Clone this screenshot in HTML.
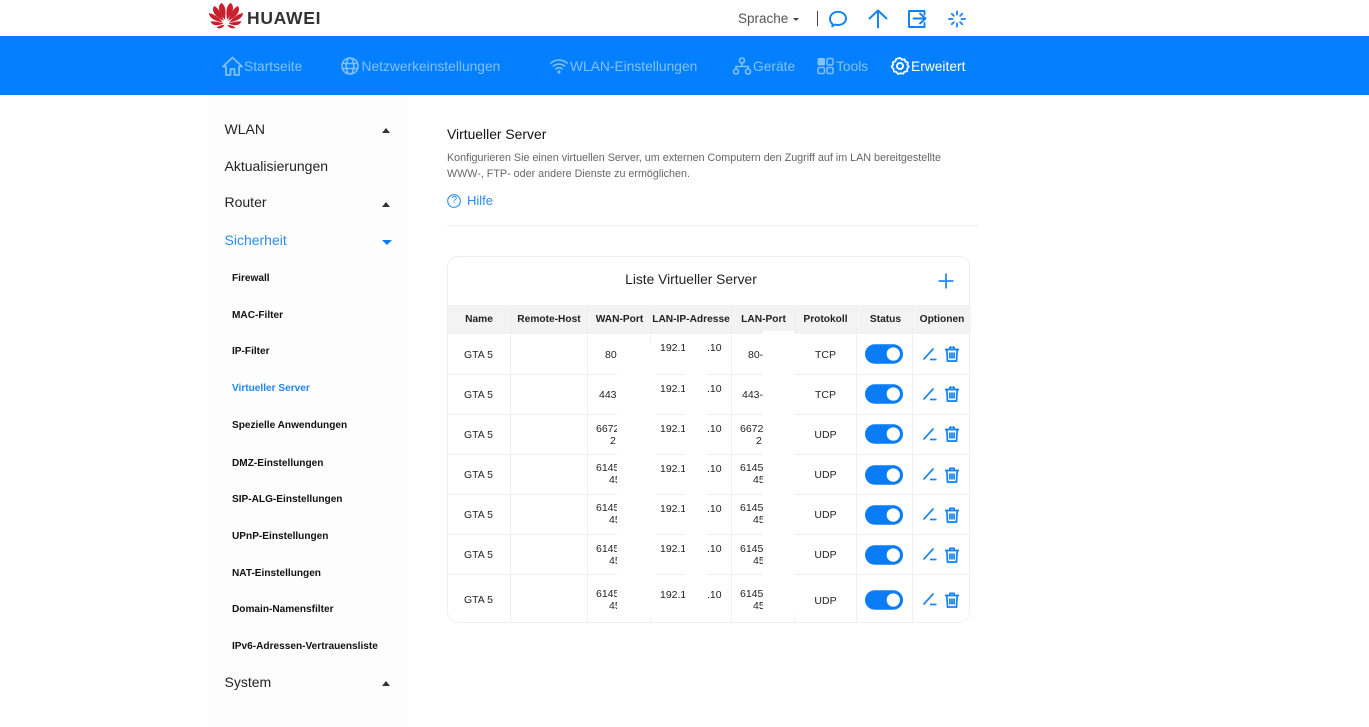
<!DOCTYPE html>
<html lang="de"><head><meta charset="utf-8"><title>Virtueller Server</title>
<style>
html,body{margin:0;padding:0;background:#fff}
body{width:1369px;height:727px;overflow:hidden;position:relative;font-family:"Liberation Sans",sans-serif;color:#222}
#w{position:absolute;left:0;top:0;width:1369px;height:727px;filter:blur(.3px);overflow:hidden}
.t{position:absolute;white-space:nowrap;line-height:16px}
.b{position:absolute}
svg{position:absolute;overflow:visible}
.n{font-size:13.8px;color:#82c0ff;top:59px}
.s{font-size:14px;left:224.500px;color:#222}
.u{font-size:10.100px;font-weight:bold;left:232px;color:#111}
.h{font-size:10.200px;font-weight:bold;top:312px;color:#222;text-align:center}
.c{font-size:10.500px;color:#222}
.i{stroke:#0f80f2;fill:none;stroke-width:1.900;stroke-linecap:round;stroke-linejoin:round}
.m{position:absolute;background:#fff}
.l{position:absolute;background:#efefef}
</style></head><body>
<svg width="0" height="0" style="position:absolute"><defs>
<symbol id="tg" viewBox="0 0 40 20" overflow="visible"><rect width="39" height="20" rx="10" fill="#0a7cf5"/><circle cx="29" cy="10" r="6.800" fill="#fff"/></symbol>
<symbol id="ed" viewBox="0 0 16 16" overflow="visible"><path d="M1.500 13.500 11.500 2.500M8 13.500H14.500" fill="none" stroke="#1f86f0" stroke-width="1.700"/></symbol>
<symbol id="tr" viewBox="0 0 16 16" overflow="visible"><path d="M1 3.500H15M5.500 3.500 6 1.300H10L10.500 3.500M2.800 3.500 3.500 15H12.500L13.200 3.500M5.900 6.500V12.500M8 6.500V12.500M10.100 6.500V12.500" fill="none" stroke="#0f80f2" stroke-width="1.700"/></symbol>
</defs></svg>
<div id="w">

<!-- top bar -->
<svg style="left:209px;top:3px" width="34" height="26" viewBox="0 0 34 26">
<g fill="#c8202f">
<path d="M12.500 0C8.500 2.500 9 9 15.800 16.800 17.300 9 16.800 2.500 12.500 0Z"/>
<path d="M21.500 0C25.500 2.500 25 9 18.200 16.800 16.700 9 17.200 2.500 21.500 0Z"/>
<path d="M5 3C2 8 6 13.500 14.800 18 12 10.500 10 5 5 3Z"/>
<path d="M29 3C32 8 28 13.500 19.200 18 22 10.500 24 5 29 3Z"/>
<path d="M0 10C0 15 6 18 14 19.500 9.500 14.500 5.500 11 0 10Z"/>
<path d="M34 10C34 15 28 18 20 19.500 24.500 14.500 28.500 11 34 10Z"/>
<path d="M1.500 18.500C4.500 24 10 22.500 14.500 20.500 10 19 6 18 1.500 18.500Z"/>
<path d="M32.500 18.500C29.500 24 24 22.500 19.500 20.500 24 19 28 18 32.500 18.500Z"/>
<path d="M7.500 24.500C11 26.500 14 25 15.500 21.800 12 22.200 9.800 23 7.500 24.500Z"/>
<path d="M26.500 24.500C23 26.500 20 25 18.500 21.800 22 22.200 24.200 23 26.500 24.500Z"/>
</g></svg>
<div class="t" style="left:247px;top:10px;font-size:17.500px;font-weight:bold;color:#333;letter-spacing:.7px">HUAWEI</div>
<div class="t" style="left:738px;top:10.500px;font-size:13.500px;color:#555">Sprache</div>
<div class="b" style="left:793px;top:17.500px;width:0;height:0;border:3px solid transparent;border-top:3.500px solid #444;border-bottom:0"></div>
<div class="b" style="left:817px;top:11px;width:1px;height:15px;background:#444"></div>
<svg style="left:829px;top:10px" width="18" height="18" viewBox="0 0 18 18"><path class="i" d="M3.500 14C1.800 12.600 1 11 1 9 1 4.800 4.500 1.800 9 1.800 13.500 1.800 17 4.800 17 8.500 17 12.300 13.500 15 9 15 7.900 15 7 14.900 6 14.500L3.300 16.400Z"/></svg>
<svg style="left:868px;top:9px" width="20" height="20" viewBox="0 0 20 20"><path class="i" d="M1.500 9.500 10 1.500 18.500 9.500M10 1.500V18.500"/></svg>
<svg style="left:908px;top:10px" width="20" height="18" viewBox="0 0 20 18"><path class="i" d="M16.500 4.500V1H1V17H16.500V13M5.500 8.500H17.500M12 3.500 17.500 8.500 12 13.500"/></svg>
<svg style="left:948px;top:10px" width="18" height="18" viewBox="0 0 18 18"><path d="M9 1.500V4.500M9 13.500V16.500M1 9H4.500M13.500 9H17M3.800 3.800 5.800 5.800M12.200 12.200 14.200 14.200M14.200 3.800 12.200 5.800M5.800 12.200 3.800 14.200" stroke="#2a8ef5" stroke-width="2" fill="none" stroke-linecap="round"/></svg>

<!-- nav -->
<div class="b" style="left:0;top:36px;width:1369px;height:59px;background:#0480ff"></div>
<svg style="left:222px;top:56px" width="21" height="20" viewBox="0 0 21 20"><path d="M1 10.500 10.500 1.500 20 10.500H17V19H12.500V13H8.500V19H4V10.500Z" fill="none" stroke="#82c0ff" stroke-width="1.800" stroke-linejoin="round"/></svg>
<div class="t n" style="left:244px">Startseite</div>
<svg style="left:341px;top:57px" width="18" height="18" viewBox="0 0 18 18"><g fill="none" stroke="#82c0ff" stroke-width="1.600"><circle cx="9" cy="9" r="8"/><ellipse cx="9" cy="9" rx="3.800" ry="8"/><path d="M1.500 6.500H16.500M1.500 11.500H16.500"/></g></svg>
<div class="t n" style="left:361.500px">Netzwerkeinstellungen</div>
<svg style="left:550px;top:58px" width="18" height="16" viewBox="0 0 18 16"><g fill="none" stroke="#82c0ff" stroke-width="1.600" stroke-linecap="round"><path d="M1 5C5.500 1 12.500 1 17 5M3.500 8C6.500 5.500 11.500 5.500 14.500 8M6 10.800C7.800 9.500 10.200 9.500 12 10.800"/></g><circle cx="9" cy="14" r="1.600" fill="#82c0ff"/></svg>
<div class="t n" style="left:570px">WLAN-Einstellungen</div>
<svg style="left:733px;top:57px" width="18" height="18" viewBox="0 0 18 18"><g fill="none" stroke="#82c0ff" stroke-width="1.600"><circle cx="9" cy="3.500" r="2.500"/><circle cx="3" cy="14.500" r="2.500"/><circle cx="15" cy="14.500" r="2.500"/><path d="M9 6V9.500M3 12V9.500H15V12"/></g></svg>
<div class="t n" style="left:753px">Geräte</div>
<svg style="left:817px;top:57px" width="17" height="18" viewBox="0 0 17 18"><rect x=".5" y="1" width="7.500" height="7.500" rx="1.500" fill="#82c0ff"/><g fill="none" stroke="#82c0ff" stroke-width="1.500"><rect x="10" y="1.500" width="6" height="6.500" rx="1.500"/><rect x="1" y="10.500" width="6.500" height="6" rx="1.500"/><rect x="10" y="10.500" width="6" height="6" rx="1.500"/></g></svg>
<div class="t n" style="left:836px">Tools</div>
<svg style="left:891px;top:57px" width="18" height="18" viewBox="0 0 18 18"><path d="M9 .8 11 2.800 13.500 2.300 14.500 4.700 16.900 5.500 16.300 8 17.800 9.500 16.300 11.500 16 14.300 13.500 14.800 12 16.800 9.500 16.200 7 17 5.500 15 3 14.500 2.500 12 .5 9.500 2.200 7.800 1.700 5.300 4.200 4.300 5.200 2Z" fill="none" stroke="#fff" stroke-width="1.800" stroke-linejoin="round"/><circle cx="9" cy="9" r="3" fill="none" stroke="#fff" stroke-width="2"/></svg>
<div class="t n" style="left:911px;color:#fff">Erweitert</div>

<!-- sidebar -->
<div class="b" style="left:208px;top:95px;width:200px;height:632px;background:#fdfdfd"></div>
<div class="t s" style="top:121px">WLAN</div>
<div class="t s" style="top:158px">Aktualisierungen</div>
<div class="t s" style="top:194px">Router</div>
<div class="t s" style="top:232px;color:#2a8cf0">Sicherheit</div>
<div class="t s" style="top:674px">System</div>
<div class="b" style="left:382px;top:128px;border:4.500px solid transparent;border-top:0;border-bottom:5px solid #333"></div>
<div class="b" style="left:382px;top:202px;border:4.500px solid transparent;border-top:0;border-bottom:5px solid #333"></div>
<div class="b" style="left:382px;top:240px;border:5px solid transparent;border-bottom:0;border-top:5px solid #0a7cf5"></div>
<div class="b" style="left:382px;top:681px;border:4.500px solid transparent;border-top:0;border-bottom:5px solid #333"></div>
<div class="t u" style="top:271px">Firewall</div>
<div class="t u" style="top:308px">MAC-Filter</div>
<div class="t u" style="top:344px">IP-Filter</div>
<div class="t u" style="top:381px;color:#1f86ee">Virtueller Server</div>
<div class="t u" style="top:418px">Spezielle Anwendungen</div>
<div class="t u" style="top:456px">DMZ-Einstellungen</div>
<div class="t u" style="top:492px">SIP-ALG-Einstellungen</div>
<div class="t u" style="top:529px">UPnP-Einstellungen</div>
<div class="t u" style="top:566px">NAT-Einstellungen</div>
<div class="t u" style="top:602px">Domain-Namensfilter</div>
<div class="t u" style="top:639px">IPv6-Adressen-Vertrauensliste</div>

<!-- head -->
<div class="t" style="left:447px;top:126px;font-size:13.900px;color:#111">Virtueller Server</div>
<div class="t" style="left:447px;top:150px;font-size:10.750px;color:#666">Konfigurieren Sie einen virtuellen Server, um externen Computern den Zugriff auf im LAN bereitgestellte</div>
<div class="t" style="left:447px;top:166px;font-size:10.750px;color:#666">WWW-, FTP- oder andere Dienste zu ermöglichen.</div>
<svg style="left:447px;top:194px" width="14" height="14" viewBox="0 0 14 14"><circle cx="7" cy="7" r="6.300" fill="none" stroke="#2a8ef5" stroke-width="1.100"/></svg>
<div class="t" style="left:451.500px;top:193px;font-size:10px;color:#2a8cf0">?</div>
<div class="t" style="left:467px;top:193px;font-size:13px;color:#2a8cf0">Hilfe</div>
<div class="l" style="left:447px;top:225px;width:532px;height:1px"></div>

<!-- table card -->
<div class="b" style="left:447px;top:256px;width:521px;height:365px;border:1px solid #eee;border-radius:11px"></div>
<div class="t" style="left:447px;width:488px;text-align:center;top:272px;font-size:13.800px;color:#222">Liste Virtueller Server</div>
<svg style="left:938px;top:273px" width="16" height="16" viewBox="0 0 16 16"><path d="M8 .5V15.500M.5 8H15.500" stroke="#2b8bf2" stroke-width="1.800" fill="none"/></svg>

<div class="b" style="left:448px;top:305px;width:523px;height:29px;background:#f3f3f3"></div>
<div class="t h" style="left:448px;width:62px">Name</div>
<div class="t h" style="left:511px;width:76px">Remote-Host</div>
<div class="t h" style="left:588px;width:63px">WAN-Port</div>
<div class="t h" style="left:651px;width:80px">LAN-IP-Adresse</div>
<div class="t h" style="left:732px;width:63px">LAN-Port</div>
<div class="t h" style="left:795px;width:61px">Protokoll</div>
<div class="t h" style="left:857px;width:57px">Status</div>
<div class="t h" style="left:913px;width:58px">Optionen</div>

<!-- vertical lines -->
<div class="l" style="left:510px;top:306px;width:1px;height:316px"></div>
<div class="l" style="left:587px;top:306px;width:1px;height:316px"></div>
<div class="l" style="left:650px;top:306px;width:1px;height:316px"></div>
<div class="l" style="left:731px;top:306px;width:1px;height:316px"></div>
<div class="l" style="left:794px;top:306px;width:1px;height:28px"></div>
<div class="l" style="left:856px;top:306px;width:1px;height:316px"></div>
<div class="l" style="left:912px;top:306px;width:1px;height:316px"></div>
<!-- horizontal lines -->
<div class="l" style="left:448px;top:374px;width:521px;height:1px"></div>
<div class="l" style="left:448px;top:414px;width:521px;height:1px"></div>
<div class="l" style="left:448px;top:454px;width:521px;height:1px"></div>
<div class="l" style="left:448px;top:494px;width:521px;height:1px"></div>
<div class="l" style="left:448px;top:534px;width:521px;height:1px"></div>
<div class="l" style="left:448px;top:574px;width:521px;height:1px"></div>

<!-- text rows -->
<div class="t c" style="left:464px;top:347px">GTA 5</div>
<div class="t c" style="left:464px;top:387px">GTA 5</div>
<div class="t c" style="left:464px;top:427px">GTA 5</div>
<div class="t c" style="left:464px;top:467px">GTA 5</div>
<div class="t c" style="left:464px;top:507px">GTA 5</div>
<div class="t c" style="left:464px;top:547px">GTA 5</div>
<div class="t c" style="left:464px;top:592px">GTA 5</div>

<div class="t c" style="left:605px;top:347px">80-80</div>
<div class="t c" style="left:599px;top:387px">443-443</div>
<div class="t c" style="left:596px;top:421px">66720</div><div class="t c" style="left:610px;top:433px">2</div>
<div class="t c" style="left:596px;top:460px">61455</div><div class="t c" style="left:609px;top:472px">45</div>
<div class="t c" style="left:596px;top:500px">61455</div><div class="t c" style="left:609px;top:512px">45</div>
<div class="t c" style="left:596px;top:541px">61455</div><div class="t c" style="left:609px;top:553px">45</div>
<div class="t c" style="left:596px;top:586px">61455</div><div class="t c" style="left:609px;top:598px">45</div>

<div class="t c" style="left:660px;top:340px">192.168</div><div class="t c" style="left:707px;top:340px">.10</div>
<div class="t c" style="left:660px;top:381px">192.168</div><div class="t c" style="left:707px;top:381px">.10</div>
<div class="t c" style="left:660px;top:421px">192.168</div><div class="t c" style="left:707px;top:421px">.10</div>
<div class="t c" style="left:660px;top:461px">192.168</div><div class="t c" style="left:707px;top:461px">.10</div>
<div class="t c" style="left:660px;top:501px">192.168</div><div class="t c" style="left:707px;top:501px">.10</div>
<div class="t c" style="left:660px;top:541px">192.168</div><div class="t c" style="left:707px;top:541px">.10</div>
<div class="t c" style="left:660px;top:587px">192.168</div><div class="t c" style="left:707px;top:587px">.10</div>

<div class="t c" style="left:748px;top:347px">80-80</div>
<div class="t c" style="left:742px;top:387px">443-443</div>
<div class="t c" style="left:740px;top:421px">66720</div><div class="t c" style="left:756px;top:433px">2</div>
<div class="t c" style="left:740px;top:460px">61455</div><div class="t c" style="left:753px;top:472px">45</div>
<div class="t c" style="left:740px;top:500px">61455</div><div class="t c" style="left:753px;top:512px">45</div>
<div class="t c" style="left:740px;top:541px">61455</div><div class="t c" style="left:753px;top:553px">45</div>
<div class="t c" style="left:740px;top:586px">61455</div><div class="t c" style="left:753px;top:598px">45</div>

<!-- white redaction masks -->
<div class="m" style="left:617px;top:343px;width:39px;height:274px"></div>
<div class="m" style="left:617px;top:335px;width:33px;height:10px"></div>
<div class="m" style="left:617px;top:617px;width:33px;height:4px"></div>
<div class="m" style="left:685px;top:335px;width:22px;height:286px"></div>
<div class="m" style="left:763px;top:331px;width:31px;height:290px"></div>
<div class="l" style="left:794px;top:615px;width:1px;height:7px"></div>

<div class="t c" style="left:795px;width:61px;text-align:center;top:347px">TCP</div>
<div class="t c" style="left:795px;width:61px;text-align:center;top:387px">TCP</div>
<div class="t c" style="left:795px;width:61px;text-align:center;top:427px">UDP</div>
<div class="t c" style="left:795px;width:61px;text-align:center;top:467px">UDP</div>
<div class="t c" style="left:795px;width:61px;text-align:center;top:507px">UDP</div>
<div class="t c" style="left:795px;width:61px;text-align:center;top:547px">UDP</div>
<div class="t c" style="left:795px;width:61px;text-align:center;top:593px">UDP</div>

<svg style="left:865px;top:344px" width="39" height="20"><use href="#tg"/></svg>
<svg style="left:865px;top:384px" width="39" height="20"><use href="#tg"/></svg>
<svg style="left:865px;top:424px" width="39" height="20"><use href="#tg"/></svg>
<svg style="left:865px;top:465px" width="39" height="20"><use href="#tg"/></svg>
<svg style="left:865px;top:505px" width="39" height="20"><use href="#tg"/></svg>
<svg style="left:865px;top:545px" width="39" height="20"><use href="#tg"/></svg>
<svg style="left:865px;top:590px" width="39" height="20"><use href="#tg"/></svg>

<svg style="left:922px;top:346px" width="16" height="16"><use href="#ed"/></svg>
<svg style="left:922px;top:386px" width="16" height="16"><use href="#ed"/></svg>
<svg style="left:922px;top:426px" width="16" height="16"><use href="#ed"/></svg>
<svg style="left:922px;top:466px" width="16" height="16"><use href="#ed"/></svg>
<svg style="left:922px;top:506px" width="16" height="16"><use href="#ed"/></svg>
<svg style="left:922px;top:546px" width="16" height="16"><use href="#ed"/></svg>
<svg style="left:922px;top:591px" width="16" height="16"><use href="#ed"/></svg>

<svg style="left:944px;top:346px" width="16" height="16"><use href="#tr"/></svg>
<svg style="left:944px;top:386px" width="16" height="16"><use href="#tr"/></svg>
<svg style="left:944px;top:426px" width="16" height="16"><use href="#tr"/></svg>
<svg style="left:944px;top:467px" width="16" height="16"><use href="#tr"/></svg>
<svg style="left:944px;top:507px" width="16" height="16"><use href="#tr"/></svg>
<svg style="left:944px;top:547px" width="16" height="16"><use href="#tr"/></svg>
<svg style="left:944px;top:592px" width="16" height="16"><use href="#tr"/></svg>
</div>
</body></html>
